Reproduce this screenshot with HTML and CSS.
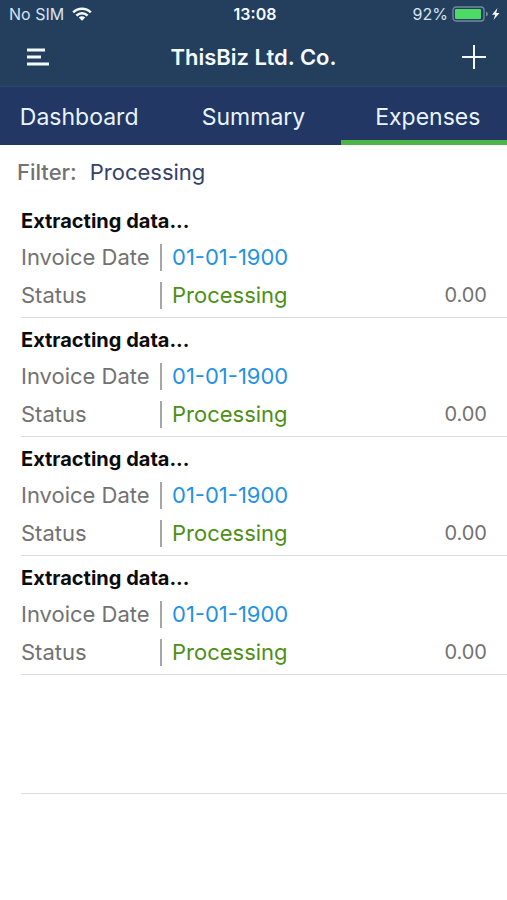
FILE: index.html
```html
<!DOCTYPE html>
<html lang="en">
<head>
<meta charset="utf-8">
<meta name="viewport" content="width=device-width, initial-scale=1">
<title>ThisBiz Ltd. Co. – Expenses</title>
<link rel="stylesheet" href="styles.css">
</head>
<body>
<header class="top">
  <div class="statusbar">
    <div class="carrier">
      <span>No SIM</span>
      <svg class="wifi" viewBox="0 0 20 14" width="20" height="14" aria-hidden="true">
        <g fill="none" stroke="currentColor" stroke-width="2.5">
          <path d="M1.2 5.4a12.4 12.4 0 0 1 17.6 0"/>
          <path d="M4.4 8.6a7.9 7.9 0 0 1 11.2 0"/>
        </g>
        <path fill="currentColor" d="M6.8 10.5a4.6 4.6 0 0 1 6.4 0L10 13.8z"/>
      </svg>
    </div>
    <div class="clock">13:08</div>
    <div class="power">
      <span>92%</span>
      <svg viewBox="0 0 49 16" width="49" height="16" aria-hidden="true">
        <rect x="1" y="1" width="31" height="14" rx="3" fill="none" stroke="#7189a0" stroke-width="1.3"/>
        <rect x="3" y="3" width="26" height="10" rx="1" fill="#4cd964"/>
        <path d="M34 5.500q2 .6 2 2.500t-2 2.500z" fill="#7189a0"/>
        <path d="M45.500 2L40 8.800h3.200L41.500 14 47.500 7h-3.300z" fill="#f4fbff"/>
      </svg>
    </div>
  </div>
  <div class="navbar">
    <button class="icon-button menu" type="button" aria-label="Menu">
      <svg viewBox="0 0 24 18" width="24" height="18" aria-hidden="true">
        <path d="M1 2h18M1 9h14M1 16h22" fill="none" stroke="currentColor" stroke-width="2.800"/>
      </svg>
    </button>
    <h1 class="title">ThisBiz Ltd. Co.</h1>
    <button class="icon-button add" type="button" aria-label="Add expense">
      <svg viewBox="0 0 24 24" width="24" height="24" aria-hidden="true">
        <path d="M12 0v24M0 12h24" fill="none" stroke="currentColor" stroke-width="2"/>
      </svg>
    </button>
  </div>
  <nav class="tabs">
    <a class="tab" href="#dashboard">Dashboard</a>
    <a class="tab" href="#summary">Summary</a>
    <a class="tab active" href="#expenses" aria-current="page">Expenses</a>
  </nav>
</header>
<main>
  <div class="filter">
    <span class="filter-label" id="filter-label">Filter:</span>
    <button class="filter-value" type="button" aria-describedby="filter-label">Processing</button>
  </div>
  <ul class="expenses">
    <li class="expense">
      <h2 class="name">Extracting data...</h2>
      <div class="field"><span class="label">Invoice Date</span><span class="date">01-01-1900</span></div>
      <div class="field"><span class="label">Status</span><span class="status">Processing</span><span class="amount">0.00</span></div>
    </li>
    <li class="expense">
      <h2 class="name">Extracting data...</h2>
      <div class="field"><span class="label">Invoice Date</span><span class="date">01-01-1900</span></div>
      <div class="field"><span class="label">Status</span><span class="status">Processing</span><span class="amount">0.00</span></div>
    </li>
    <li class="expense">
      <h2 class="name">Extracting data...</h2>
      <div class="field"><span class="label">Invoice Date</span><span class="date">01-01-1900</span></div>
      <div class="field"><span class="label">Status</span><span class="status">Processing</span><span class="amount">0.00</span></div>
    </li>
    <li class="expense">
      <h2 class="name">Extracting data...</h2>
      <div class="field"><span class="label">Invoice Date</span><span class="date">01-01-1900</span></div>
      <div class="field"><span class="label">Status</span><span class="status">Processing</span><span class="amount">0.00</span></div>
    </li>
    <li class="expense empty"></li>
  </ul>
</main>
</body>
</html>
```
FILE: styles.css
```css
* {
  box-sizing: border-box;
}

body {
  margin: 0;
  background: #fff;
  color: #727272;
  font-family: Inter, Roboto, "Liberation Sans", sans-serif;
  font-size: 22px;
}

button {
  padding: 0;
  border: 0;
  background: none;
  font: inherit;
}

svg {
  display: block;
}

.top {
  overflow: hidden;
  background: #243e5e;
  color: #f4fbff;
}

.statusbar {
  display: grid;
  grid-template-columns: 1fr auto 1fr;
  align-items: center;
  height: 28px;
  padding: 0 6px 0 9px;
  font-size: 16px;
}

.carrier,
.power {
  display: flex;
  align-items: center;
  gap: 8px;
  color: #d5e4f1;
}

.wifi {
  color: #f4fbff;
}

.power {
  justify-content: flex-end;
  gap: 4px;
}

.clock {
  font-weight: 600;
}

.navbar {
  display: grid;
  grid-template-columns: 1fr auto 1fr;
  align-items: center;
  height: 59px;
  padding: 0 21px;
  border-bottom: 1px solid #2c4868;
}

.icon-button {
  color: inherit;
}

.icon-button.menu {
  justify-self: start;
  padding-left: 5px;
}

.icon-button.add {
  justify-self: end;
}

.title {
  margin: 0;
  font-size: 22px;
  font-weight: 600;
}

/* The outer tabs run slightly past the screen edges. */
.tabs {
  display: grid;
  grid-template-columns: 1fr 1fr 1fr;
  height: 58px;
  margin: 0 -8px;
  background: #223763;
}

.tab {
  display: flex;
  align-items: center;
  justify-content: center;
  padding-top: 6px;
  border-bottom: 5px solid transparent;
  color: #e8f4ff;
  font-size: 23px;
  text-decoration: none;
}

.tab.active {
  border-bottom-color: #4cb548;
}

.filter {
  display: flex;
  align-items: center;
  gap: 13px;
  height: 54px;
  padding: 0 17px;
}

.filter-label {
  font-weight: 500;
}

.filter-value {
  color: #344369;
}

.expenses {
  margin: 0;
  padding: 0 0 0 21px;
  list-style: none;
}

.expense {
  min-height: 119px;
  padding: 5px 20px 3px 0;
  border-bottom: 1px solid #dcdcdc;
}

.name {
  margin: 0;
  color: #0c0c0c;
  font-size: 20px;
  font-weight: 700;
  line-height: 34px;
}

.field {
  display: flex;
  align-items: center;
  height: 38px;
}

.label {
  width: 139px;
}

.date,
.status {
  padding-left: 10px;
  border-left: 2px solid #a6a6a6;
  line-height: 27px;
}

.date {
  color: #2492e3;
}

.status {
  color: #4d8f17;
}

.amount {
  margin-left: auto;
  font-size: 20px;
}
```
